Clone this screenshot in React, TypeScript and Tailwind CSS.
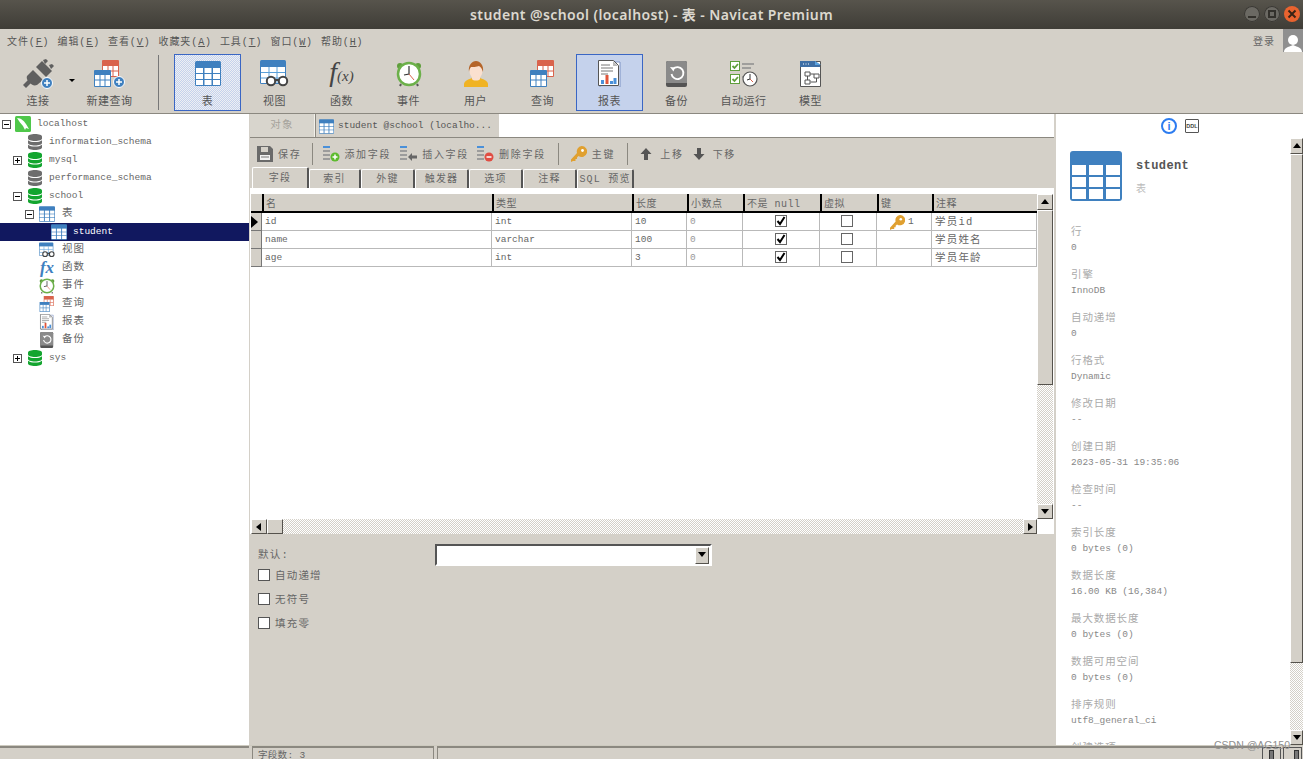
import { ReactNode } from 'react';

const FONT = "font-['Liberation_Mono','Noto_Sans_CJK_SC',monospace]";
const RAISED = 'border border-t-white border-l-white border-r-[#55524c] border-b-[#55524c] bg-[#d4d0c8]';
const CHECKER = 'bg-[repeating-conic-gradient(#d4d0c8_0_25%,#ffffff_0_50%)] bg-[length:2px_2px]';

type IconProps = { className?: string };

function TableIcon({ className }: IconProps) {
  return (
    <svg viewBox="0 0 26 25" className={className}>
      <rect width="26" height="25" rx="1.5" fill="#3f80bf" />
      <g fill="#fff">
        <rect x="1" y="7" width="7" height="5" />
        <rect x="9.5" y="7" width="7" height="5" />
        <rect x="18" y="7" width="7" height="5" />
        <rect x="1" y="13" width="7" height="5" />
        <rect x="9.5" y="13" width="7" height="5" />
        <rect x="18" y="13" width="7" height="5" />
        <rect x="1" y="19" width="7" height="5" />
        <rect x="9.5" y="19" width="7" height="5" />
        <rect x="18" y="19" width="7" height="5" />
      </g>
    </svg>
  );
}

function PlusBadge({ cx, cy, r = 5.5 }: { cx: number; cy: number; r?: number }) {
  return (
    <g>
      <circle cx={cx} cy={cy} r={r} fill="#3f80bf" stroke="#fff" strokeWidth="1" />
      <path d={`M${cx - 3} ${cy}h6M${cx} ${cy - 3}v6`} stroke="#fff" strokeWidth="1.5" />
    </g>
  );
}

function PlugIcon({ className }: IconProps) {
  return (
    <svg viewBox="0 0 32 30" className={className}>
      <g fill="#5f5f5f">
        <path d="M1 26l5-5 3 3-5 5z" />
        <path d="M5 17l6-6 10 10-6 5c-3 1-5 0-7-2s-4-4-3-7z" />
        <path d="M14 8l6-6 10 10-6 6z" />
        <path d="M21 1l3-1 2 2-3 3zM27 6l3-1 2 2-3 3z" />
      </g>
      <PlusBadge cx={25} cy={24} />
    </svg>
  );
}

function NewQueryIcon({ className }: IconProps) {
  return (
    <svg viewBox="0 0 32 28" className={className}>
      <rect x="8" y="0" width="17" height="17" rx="1" fill="#d9634c" />
      <path d="M9 6h15v10H9z" fill="#fff" />
      <path d="M14 6v10M19 6v10M9 11h15" stroke="#d9634c" />
      <rect x="0" y="10" width="17" height="17" rx="1" fill="#3f80bf" />
      <path d="M1 15h15v11H1z" fill="#fff" />
      <path d="M6 15v11M11 15v11M1 20h15" stroke="#3f80bf" />
      <PlusBadge cx={25} cy={22} />
    </svg>
  );
}

function QueryIcon({ className }: IconProps) {
  return (
    <svg viewBox="0 0 25 27" className={className}>
      <rect x="7" y="0" width="17" height="17" rx="1" fill="#d9634c" />
      <path d="M8 6h15v10H8z" fill="#fff" />
      <path d="M13 6v10M18 6v10M8 11h15" stroke="#d9634c" />
      <rect x="0" y="10" width="17" height="17" rx="1" fill="#3f80bf" />
      <path d="M1 15h15v11H1z" fill="#fff" />
      <path d="M6 15v11M11 15v11M1 20h15" stroke="#3f80bf" />
    </svg>
  );
}

function ViewIcon({ className }: IconProps) {
  return (
    <svg viewBox="0 0 29 27" className={className}>
      <rect width="26" height="24" rx="1.5" fill="#3f80bf" />
      <path d="M1 7h24v16H1z" fill="#fff" />
      <path d="M9 7v16M17 7v16M1 12.5h24M1 18h24" stroke="#5a9fd8" />
      <circle cx="11" cy="21" r="4.2" fill="#fff" stroke="#444" strokeWidth="2" />
      <circle cx="23" cy="21" r="4.2" fill="#fff" stroke="#444" strokeWidth="2" />
      <path d="M15 20h4" stroke="#444" strokeWidth="2" />
    </svg>
  );
}

function ClockIcon({ className }: IconProps) {
  return (
    <svg viewBox="0 0 26 26" className={className}>
      <circle cx="4" cy="5" r="3" fill="#5f9e3c" />
      <circle cx="22" cy="5" r="3" fill="#5f9e3c" />
      <path d="M5 23l-1 2M21 23l1 2" stroke="#555" strokeWidth="2" />
      <circle cx="13" cy="13" r="11" fill="#fff" stroke="#6cb04a" strokeWidth="2.5" />
      <path d="M13 5v8l-5 1" fill="none" stroke="#333" strokeWidth="1.2" />
      <path d="M13 13l5 6" stroke="#d9634c" strokeWidth="1" />
    </svg>
  );
}

function UserIcon({ className }: IconProps) {
  return (
    <svg viewBox="0 0 24 26" className={className}>
      <path d="M0 26v-3c0-3 5-5 8-6h8c3 1 8 3 8 6v3z" fill="#f0b323" />
      <path d="M8 15h8v3c-1 2-7 2-8 0z" fill="#fbe0cf" />
      <ellipse cx="12" cy="10" rx="6.5" ry="8" fill="#fbe0cf" />
      <path d="M5 11C4 4 8 0 12 0s8 4 7 11c-1-3-2-5-4-6-2 1-7 1-8 1-1 1-2 3-2 5z" fill="#b5652a" />
    </svg>
  );
}

function ReportIcon({ className }: IconProps) {
  return (
    <svg viewBox="0 0 23 27" className={className}>
      <path d="M2 2h20v25H2z" fill="#fff" stroke="#7d92c4" />
      <path d="M.5.5h15l5 5v20H.5z" fill="#fff" stroke="#555" />
      <path d="M15 1v5h5z" fill="#bbb" />
      <path d="M3 5h9M3 8h12M3 11h12M3 14h7" stroke="#777" />
      <rect x="3" y="20" width="3" height="4" fill="#4a90d9" />
      <rect x="7.5" y="15" width="3" height="9" fill="#e0553a" />
      <rect x="12" y="21" width="3" height="3" fill="#4a90d9" />
      <rect x="15.5" y="18" width="3" height="6" fill="#4a90d9" />
    </svg>
  );
}

function BackupIcon({ className }: IconProps) {
  return (
    <svg viewBox="0 0 22 26" className={className}>
      <rect width="21" height="26" rx="2" fill="#545454" />
      <path d="M0 2a2 2 0 012-2h17a2 2 0 012 2v20H0z" fill="#8a8a8a" />
      <path d="M7 8a6 6 0 11-1.5 5" fill="none" stroke="#fff" strokeWidth="1.8" />
      <path d="M4 6l5 .5-1.5 4z" fill="#fff" />
    </svg>
  );
}

function AutoRunIcon({ className }: IconProps) {
  return (
    <svg viewBox="0 0 28 26" className={className}>
      <rect x=".5" y=".5" width="9" height="9" fill="#fff" stroke="#5f9e3c" />
      <path d="M2.5 5l2 2 3.5-4" fill="none" stroke="#5f9e3c" strokeWidth="1.8" />
      <rect x=".5" y="13.5" width="9" height="9" fill="#fff" stroke="#5f9e3c" />
      <path d="M2.5 18l2 2 3.5-4" fill="none" stroke="#5f9e3c" strokeWidth="1.8" />
      <path d="M12 3h12M12 7h9M12 16h3" stroke="#8d8d8d" strokeWidth="1.6" />
      <circle cx="20" cy="18" r="7" fill="#fff" stroke="#555" strokeWidth="1.2" />
      <path d="M20 13v5l-3 1" fill="none" stroke="#333" />
      <path d="M20 18l3 3" stroke="#d9634c" />
    </svg>
  );
}

function ModelIcon({ className }: IconProps) {
  return (
    <svg viewBox="0 0 22 26" className={className}>
      <path d="M.5.5h20v25H.5z" fill="#fff" stroke="#555" />
      <path d="M0 0h15l5 4v2H0z" fill="#3f6fa5" />
      <path d="M15 0l6 4h-6z" fill="#5aa2df" />
      <path d="M3 3h1M5.5 3h1M8 3h1" stroke="#fff" />
      <path d="M5 11h5v4H5zM14 13h5v4h-5zM5 19h5v4H5zM10 13h4M7.5 15v4M16.5 17v4h-6" fill="none" stroke="#555" />
    </svg>
  );
}

function DbIcon({ color, className }: { color: string; className?: string }) {
  return (
    <svg viewBox="0 0 14 16" className={className}>
      <path d="M0 2.5C0 1 3 0 7 0s7 1 7 2.5v2C14 6 11 7 7 7S0 6 0 4.500z" fill={color} />
      <path d="M0 6.200C1.500 7.500 4 8 7 8s5.500-.5 7-1.800V9c0 1.500-3 2.500-7 2.500S0 10.500 0 9z" fill={color} />
      <path d="M0 10.700C1.500 12 4 12.500 7 12.500s5.500-.5 7-1.800v2.800C14 15 11 16 7 16s-7-1-7-2.500z" fill={color} />
    </svg>
  );
}

function DolphinIcon({ className }: IconProps) {
  return (
    <svg viewBox="0 0 16 16" className={className}>
      <rect width="16" height="16" rx="1.5" fill="#4fc74a" />
      <path d="M2 2c4 0 7 3 9 6l3 5-3-1-1 2-2-4C6 8 4 5 2 2z" fill="#fff" />
    </svg>
  );
}

function KeyIcon({ className }: IconProps) {
  return (
    <svg viewBox="0 0 16 16" className={className}>
      <path d="M10.500 0a5.500 5.500 0 11-3 10l-1.500 1.500v1.500H4.500V15H2l-2 1v-2.500L6 7A5.500 5.500 0 0110.500 0z" fill="#e0a030" />
      <circle cx="11.500" cy="4.500" r="1.400" fill="#fff" />
    </svg>
  );
}

function FieldIcon({ badge }: { badge: 'add' | 'insert' | 'remove' }) {
  return (
    <svg viewBox="0 0 17 16" className="h-4 w-[17px] shrink-0">
      <path d="M0 1h7" stroke="#4a90d9" strokeWidth="2" />
      <path d="M0 5h7M0 9h7M0 13h7" stroke="#9c9c9c" strokeWidth="2" />
      {badge === 'add' && (
        <g>
          <circle cx="12" cy="11" r="4.500" fill="#5dbb2e" />
          <path d="M9.500 11h5M12 8.500v5" stroke="#fff" strokeWidth="1.500" />
        </g>
      )}
      {badge === 'remove' && (
        <g>
          <circle cx="12" cy="11" r="4.500" fill="#e04d43" />
          <path d="M9.500 11h5" stroke="#fff" strokeWidth="1.500" />
        </g>
      )}
      {badge === 'insert' && <path d="M8 11l4-4v2.500h5v3h-5V15z" fill="#666" />}
    </svg>
  );
}

function SaveIcon() {
  return (
    <svg viewBox="0 0 16 16" className="h-4 w-4 shrink-0">
      <path d="M0 0h13l3 3v13H0z" fill="#6a6a6a" />
      <rect x="4" y="1" width="7" height="5" fill="#d4d0c8" />
      <rect x="3" y="9" width="10" height="5" fill="#f2f2f2" />
      <path d="M4 11h8" stroke="#777" />
    </svg>
  );
}

function ArrowIcon({ down }: { down?: boolean }) {
  return (
    <svg viewBox="0 0 12 12" className={down ? 'h-3 w-3 shrink-0 rotate-180' : 'h-3 w-3 shrink-0'}>
      <path d="M6 0l5.500 6H8v6H4V6H.5z" fill="#555" />
    </svg>
  );
}

function Triangle({ dir }: { dir: 'up' | 'down' | 'left' | 'right' }) {
  const d = { up: 'M4 1l4 5H0z', down: 'M0 1h8L4 6z', left: 'M6 0v8L1 4z', right: 'M2 0l5 4-5 4z' }[dir];
  return (
    <svg viewBox="0 0 8 8" className="h-2 w-2">
      <path d={d} fill="#000" />
    </svg>
  );
}

function Check({ on, className }: { on?: boolean; className?: string }) {
  return (
    <span className={`flex h-3 w-3 items-center justify-center border border-[#666] bg-white ${className ?? ''}`}>
      {on && (
        <svg viewBox="0 0 10 10" className="h-2.5 w-2.5">
          <path d="M1.500 5l2.500 3 4.500-7" fill="none" stroke="#000" strokeWidth="2" />
        </svg>
      )}
    </span>
  );
}

function ToolBtn({ label, icon, active, hatch, w = 'w-[67px]' }: { label: string; icon: ReactNode; active?: boolean; hatch?: boolean; w?: string }) {
  let state = 'border border-transparent';
  if (active) state = 'border border-[#3a66c4] bg-[#c5d2ec]';
  if (hatch) state = 'border border-[#3a66c4] bg-[repeating-conic-gradient(#c5d2ec_0_25%,#eef0f4_0_50%)] bg-[length:2px_2px]';
  return (
    <div className={`relative flex h-[57px] shrink-0 flex-col items-center ${w} ${state}`}>
      <div className="flex h-[34px] items-center justify-center pt-[3px]">{icon}</div>
      <span className="mt-[6px] text-[11px] leading-[14px] tracking-[0.5px] text-[#555]">{label}</span>
    </div>
  );
}

const MENUS = [
  ['文件(', 'F'], ['编辑(', 'E'], ['查看(', 'V'], ['收藏夹(', 'A'], ['工具(', 'T'], ['窗口(', 'W'], ['帮助(', 'H'],
];

type TreeRow = { label: string; icon: ReactNode; pl: string; slot: string; gap: string; exp?: '+' | '-'; selected?: boolean; cjk?: boolean };

const gray = '#6d6d6d';
const green = '#13a52f';
const L1 = { pl: 'pl-[13px]', slot: 'w-[15px]', gap: 'ml-[7px]' };
const L2 = { pl: 'pl-[25px]', slot: 'w-[14px]', gap: 'ml-[7px]', cjk: true };
const dbIcon = (c: string) => <DbIcon color={c} className="h-4 w-[14px]" />;

const TREE: TreeRow[] = [
  { label: 'localhost', icon: <DolphinIcon className="h-4 w-4" />, pl: 'pl-[2px]', slot: 'w-[13px]', gap: 'ml-[6px]', exp: '-' },
  { label: 'information_schema', icon: dbIcon(gray), ...L1 },
  { label: 'mysql', icon: dbIcon(green), ...L1, exp: '+' },
  { label: 'performance_schema', icon: dbIcon(gray), ...L1 },
  { label: 'school', icon: dbIcon(green), ...L1, exp: '-' },
  { label: '表', icon: <TableIcon className="h-4 w-4" />, ...L2, exp: '-' },
  { label: 'student', icon: <TableIcon className="h-4 w-4" />, pl: 'pl-[37px]', slot: 'w-[14px]', gap: 'ml-[6px]', selected: true },
  { label: '视图', icon: <ViewIcon className="h-4 w-4" />, ...L2 },
  { label: '函数', icon: <span className="block w-4 text-center font-['Liberation_Serif',serif] text-[17px] leading-4 font-bold italic text-[#3f80bf]">fx</span>, ...L2 },
  { label: '事件', icon: <ClockIcon className="h-4 w-4" />, ...L2 },
  { label: '查询', icon: <QueryIcon className="h-4 w-4" />, ...L2 },
  { label: '报表', icon: <ReportIcon className="h-4 w-4" />, ...L2 },
  { label: '备份', icon: <BackupIcon className="h-4 w-4" />, ...L2 },
  { label: 'sys', icon: dbIcon(green), ...L1, exp: '+' },
];

const SUBTABS = [
  ['字段', 'w-[57px]'], ['索引', 'w-[52px]'], ['外键', 'w-[54px]'], ['触发器', 'w-[54px]'], ['选项', 'w-[54px]'], ['注释', 'w-[54px]'], ['SQL 预览', 'w-[57px]'],
];

const COLS = 'grid-cols-[11px_230px_140px_55px_56px_77px_57px_55px_105px]';
const HEADERS = ['名', '类型', '长度', '小数点', '不是 null', '虚拟', '键', '注释'];
const FIELDS = [
  { name: 'id', type: 'int', len: '10', note: '学员id', key: true },
  { name: 'name', type: 'varchar', len: '100', note: '学员姓名' },
  { name: 'age', type: 'int', len: '3', note: '学员年龄' },
];

const INFO = [
  ['行', '0'], ['引擎', 'InnoDB'], ['自动递增', '0'], ['行格式', 'Dynamic'], ['修改日期', '--'],
  ['创建日期', '2023-05-31 19:35:06'], ['检查时间', '--'], ['索引长度', '0 bytes (0)'], ['数据长度', '16.00 KB (16,384)'],
  ['最大数据长度', '0 bytes (0)'], ['数据可用空间', '0 bytes (0)'], ['排序规则', 'utf8_general_ci'], ['创建选项', ''],
];

const CELL = 'flex h-[18px] items-center border-r border-b border-[#b9b9b9] pl-[3px] pt-[2px] text-[9.5px] text-[#666]';

function TitleBar() {
  return (
    <div className="relative flex h-[29px] shrink-0 items-center justify-center bg-gradient-to-b from-[#57544c] to-[#3f3d37]">
      <span className="font-['Noto_Sans','Noto_Sans_CJK_SC',sans-serif] text-[14px] font-semibold tracking-[0.4px] text-[#dcd8cf]">student @school (localhost) - 表 - Navicat Premium</span>
      <div className="absolute right-[3px] top-[6px] flex gap-[4px]">
        <span className="flex h-4 w-4 items-center justify-center rounded-full bg-[#6b6963] shadow-[inset_0_0_0_1px_#3a3833]">
          <span className="mt-[5px] h-[2px] w-2 bg-[#33312c]" />
        </span>
        <span className="flex h-4 w-4 items-center justify-center rounded-full bg-[#6b6963] shadow-[inset_0_0_0_1px_#3a3833]">
          <span className="h-2 w-2 border-2 border-[#33312c]" />
        </span>
        <span className="flex h-4 w-4 items-center justify-center rounded-full bg-[#e9632f] text-[#3a2315]">
          <svg viewBox="0 0 10 10" className="h-2.5 w-2.5">
            <path d="M1.500 1.500l7 7M8.500 1.500l-7 7" stroke="currentColor" strokeWidth="2" />
          </svg>
        </span>
      </div>
    </div>
  );
}

function MenuBar() {
  return (
    <div className="flex h-[25px] shrink-0 items-center pl-[7px]">
      <div className="flex gap-[8px] pt-[1px]">
        {MENUS.map(([text, key]) => (
          <span key={key} className="text-[10px] tracking-[0.9px] text-[#555]">
            {text}
            <span className="underline">{key}</span>)
          </span>
        ))}
      </div>
      <span className="ml-auto mr-[8px] pt-[1px] text-[10px] tracking-[1px] text-[#666]">登录</span>
      <div className="flex h-[23px] w-[20px] items-end justify-center self-start overflow-hidden bg-[#8f8f8f]">
        <svg viewBox="0 0 20 20" className="h-5 w-5">
          <circle cx="10" cy="8" r="5" fill="#fff" />
          <path d="M1 20c0-4 4-5 9-7 5 2 9 3 9 7z" fill="#fff" />
        </svg>
      </div>
    </div>
  );
}

function Toolbar() {
  return (
    <div className="flex h-[59px] shrink-0 items-start pl-[5px]">
      <ToolBtn label="连接" w="w-[66px]" icon={<PlugIcon className="h-[30px] w-[32px]" />} />
      <div className="mt-[25px] w-[5px] shrink-0 -translate-x-[2px]">
        <span className="block h-0 w-0 border-x-[3px] border-t-[3px] border-x-transparent border-t-black" />
      </div>
      <ToolBtn label="新建查询" icon={<NewQueryIcon className="h-[28px] w-[32px]" />} />
      <div className="ml-[15px] mr-[15px] mt-[1px] h-[55px] w-[1px] shrink-0 bg-[#777]" />
      <ToolBtn label="表" hatch icon={<TableIcon className="h-[25px] w-[26px]" />} />
      <ToolBtn label="视图" icon={<ViewIcon className="h-[27px] w-[29px]" />} />
      <ToolBtn label="函数" icon={<span className="font-['Liberation_Serif',serif] text-[28px] leading-7 italic text-[#444]">f<span className="text-[15px]">(x)</span></span>} />
      <ToolBtn label="事件" icon={<ClockIcon className="h-[26px] w-[26px]" />} />
      <ToolBtn label="用户" icon={<UserIcon className="h-[26px] w-[24px]" />} />
      <ToolBtn label="查询" icon={<QueryIcon className="h-[27px] w-[25px]" />} />
      <ToolBtn label="报表" active icon={<ReportIcon className="h-[27px] w-[23px]" />} />
      <ToolBtn label="备份" icon={<BackupIcon className="h-[26px] w-[22px]" />} />
      <ToolBtn label="自动运行" icon={<AutoRunIcon className="h-[26px] w-[28px]" />} />
      <ToolBtn label="模型" icon={<ModelIcon className="h-[26px] w-[22px]" />} />
    </div>
  );
}

function Tree() {
  return (
    <div className="w-[249px] shrink-0 overflow-hidden bg-white pt-[1px]">
      {TREE.map((row) => (
        <div key={row.label} className={`flex h-[18px] items-center ${row.pl} ${row.selected ? 'bg-[#11185f] text-white' : 'text-[#666]'}`}>
          <span className={`flex shrink-0 ${row.slot}`}>
            {row.exp && (
              <span className="relative flex h-[9px] w-[9px] items-center justify-center border border-[#555] bg-white">
                <span className="h-[1px] w-[5px] bg-black" />
                {row.exp === '+' && <span className="absolute h-[5px] w-[1px] bg-black" />}
              </span>
            )}
          </span>
          <span className="shrink-0">{row.icon}</span>
          <span className={`${row.gap} ${row.cjk ? 'text-[10.5px] tracking-[1px]' : 'text-[9.5px]'}`}>{row.label}</span>
        </div>
      ))}
    </div>
  );
}

function VScroll({ thumb, className }: { thumb: string; className?: string }) {
  return (
    <div className={`flex shrink-0 flex-col ${className ?? ''}`}>
      <div className={`flex h-[16px] shrink-0 items-center justify-center ${RAISED}`}><Triangle dir="up" /></div>
      <div className={`shrink-0 ${RAISED} ${thumb}`} />
      <div className={`min-h-0 flex-1 ${CHECKER}`} />
      <div className={`flex h-[15px] shrink-0 items-center justify-center ${RAISED}`}><Triangle dir="down" /></div>
    </div>
  );
}

function FieldsTable() {
  return (
    <div className="flex h-[346px] shrink-0 flex-col bg-white pl-[1px] pr-[1px] pt-[6px]">
      <div className="flex min-h-0 flex-1">
        <div className="w-[786px] shrink-0">
          <div className={`grid ${COLS} border-b-2 border-black`}>
            <div className="h-[17px] bg-[#d4d0c8]" />
            {HEADERS.map((h) => (
              <div key={h} className="flex h-[17px] items-center border-l-2 border-black bg-[#d4d0c8] pl-[2px] pt-[3px] text-[10px] tracking-[0.5px] text-[#666]">{h}</div>
            ))}
          </div>
          {FIELDS.map((f, i) => (
            <div key={f.name} className={`grid ${COLS}`}>
              <div className="flex h-[18px] items-center border-r border-b border-[#777] bg-[#d4d0c8]">
                {i === 0 && <span className="h-0 w-0 border-y-[6px] border-l-[7px] border-y-transparent border-l-black" />}
              </div>
              <div className={CELL}>{f.name}</div>
              <div className={CELL}>{f.type}</div>
              <div className={CELL}>{f.len}</div>
              <div className={`${CELL} text-[#999]`}>0</div>
              <div className={`${CELL} justify-center pl-0 pr-[3px]`}><Check on className="mb-[4px]" /></div>
              <div className={`${CELL} justify-center pl-0 pr-[5px]`}><Check className="mb-[4px]" /></div>
              <div className={`${CELL} pl-[13px]`}>
                {f.key && <KeyIcon className="mb-[1px] mr-[3px] h-[15px] w-[15px]" />}
                {f.key && <span>1</span>}
              </div>
              <div className={`${CELL} text-[10.5px] tracking-[1.2px]`}>{f.note}</div>
            </div>
          ))}
        </div>
        <VScroll thumb="h-[175px]" className="w-[16px]" />
      </div>
      <div className="flex h-[15px] w-[786px] shrink-0">
        <div className={`flex h-[15px] w-[16px] items-center justify-center ${RAISED}`}><Triangle dir="left" /></div>
        <div className={`h-[15px] w-[16px] ${RAISED}`} />
        <div className={`flex-1 ${CHECKER}`} />
        <div className={`flex h-[15px] w-[14px] items-center justify-center ${RAISED}`}><Triangle dir="right" /></div>
      </div>
    </div>
  );
}

function Center() {
  return (
    <div className="flex w-[807px] shrink-0 flex-col pl-[1px] pr-[2px]">
      <div className="flex h-[24px] shrink-0 border-b border-[#8b8880]">
        <div className="flex w-[65px] items-center justify-center border-r border-[#f2f0ea] bg-[#d8d5cd] pt-[1px] text-[10.5px] tracking-[1.2px] text-[#a5a29b]">对象</div>
        <div className="flex w-[184px] items-center gap-[4px] border-l border-[#8b8880] pl-[3px] pt-[1px] text-[9.5px] text-[#555]">
          <TableIcon className="h-[15px] w-[15px]" />
          <span>student @school (localho...</span>
        </div>
        <div className="flex-1 bg-white" />
      </div>
      <div className="flex h-[29px] shrink-0 items-center pl-[7px] pt-[3px] text-[10px] tracking-[1.7px] text-[#666]">
        <SaveIcon />
        <span className="ml-[5px] pt-[2px]">保存</span>
        <span className="ml-[11px] h-[22px] w-[1px] bg-[#8b8880]" />
        <span className="ml-[10px]"><FieldIcon badge="add" /></span>
        <span className="ml-[4px] pt-[2px]">添加字段</span>
        <span className="ml-[9px]"><FieldIcon badge="insert" /></span>
        <span className="ml-[5px] pt-[2px]">插入字段</span>
        <span className="ml-[8px]"><FieldIcon badge="remove" /></span>
        <span className="ml-[5px] pt-[2px]">删除字段</span>
        <span className="ml-[12px] h-[22px] w-[1px] bg-[#8b8880]" />
        <span className="ml-[12px]"><KeyIcon className="h-4 w-4" /></span>
        <span className="ml-[5px] pt-[2px]">主键</span>
        <span className="ml-[12px] h-[22px] w-[1px] bg-[#8b8880]" />
        <span className="ml-[12px]"><ArrowIcon /></span>
        <span className="ml-[8px] pt-[2px]">上移</span>
        <span className="ml-[9px]"><ArrowIcon down /></span>
        <span className="ml-[8px] pt-[2px]">下移</span>
      </div>
      <div className="flex h-[21px] shrink-0 items-end pl-[2px]">
        {SUBTABS.map(([label, w], i) => (
          <div key={label} className={`flex ${i === 0 ? 'h-[21px]' : 'h-[19px]'} ${w} items-center justify-center rounded-t-[2px] border-t border-l border-r-2 border-t-white border-l-white border-r-[#555] text-[10px] tracking-[1.2px] text-[#666]`}>{label}</div>
        ))}
      </div>
      <FieldsTable />
      <div className="flex-1 pl-[8px] pt-[10px] text-[10.5px] tracking-[1.2px] text-[#666]">
        <div className="flex h-[22px] items-center">
          <span className="w-[177px] pt-[2px]">默认:</span>
          <div className="flex h-[22px] w-[277px] items-center justify-end border-2 border-t-[#555] border-l-[#555] border-r-white border-b-white bg-white pr-[1px]">
            <div className={`flex h-[17px] w-[14px] items-center justify-center ${RAISED}`}><Triangle dir="down" /></div>
          </div>
        </div>
        <div className="-mt-[3px] flex flex-col">
          {['自动递增', '无符号', '填充零'].map((label) => (
            <div key={label} className="flex h-[24px] items-center gap-[5px]">
              <span className="h-3 w-3 border border-[#555] bg-white" />
              <span className="pt-[3px]">{label}</span>
            </div>
          ))}
        </div>
      </div>
    </div>
  );
}

function InfoPanel() {
  return (
    <div className="flex min-w-0 flex-1 flex-col bg-white">
      <div className="flex h-[24px] shrink-0 items-center justify-center gap-[8px] pl-[1px]">
        <span className="flex h-4 w-4 items-center justify-center rounded-full border-2 border-[#2c7cf0] font-['Liberation_Sans',sans-serif] text-[11px] leading-none font-bold text-[#2c7cf0]">i</span>
        <span className="flex h-[14px] w-[14px] items-center justify-center rounded-[1px] border border-[#555] font-['Liberation_Sans',sans-serif] text-[5.5px] font-bold text-[#444]">DDL</span>
      </div>
      <div className="flex min-h-0 flex-1">
        <div className="min-w-0 flex-1 overflow-hidden pl-[15px] pt-[13px]">
          <div className="-ml-[1px] flex h-[50px]">
            <TableIcon className="h-[50px] w-[52px]" />
            <div className="ml-[14px] pt-[8px]">
              <div className="text-[12px] leading-[14px] font-bold tracking-[0.4px] text-[#555]">student</div>
              <div className="mt-[9px] text-[10px] text-[#bbb]">表</div>
            </div>
          </div>
          <div className="mt-[23px]">
            {INFO.map(([label, value]) => (
              <div key={label} className="h-[43px] overflow-hidden">
                <div className="h-[17px] text-[10.5px] leading-[16px] tracking-[0.9px] text-[#aaa]">{label}</div>
                <div className="h-[14px] text-[9.5px] leading-[14px] text-[#888]">{value}</div>
              </div>
            ))}
          </div>
        </div>
        <VScroll thumb="h-[509px]" className="w-[13px]" />
      </div>
    </div>
  );
}

function StatusBar() {
  return (
    <div className="relative flex h-[14px] shrink-0 overflow-hidden border-t border-[#cdcabf] text-[9.5px] text-[#666]">
      <div className="mr-[3px] w-[249px] border-t-2 border-[#8b8880]" />
      <div className="mr-[3px] h-[20px] w-[182px] border-t-2 border-l border-r border-[#8b8880] pl-[5px] leading-[16px] tracking-[0.3px]">字段数: 3</div>
      <div className="h-[20px] flex-1 border-t-2 border-l border-[#8b8880]" />
      <div className="flex gap-[2px] pr-[1px]">
        <span className="mt-[1px] h-[14px] w-[19px] border border-[#555]"><span className="mx-auto mt-[2px] block h-[10px] w-[5px] border border-[#333] bg-[#777]" /></span>
        <span className="mt-[1px] h-[14px] w-[19px] border border-[#555]"><span className="ml-auto mr-[2px] mt-[2px] block h-[10px] w-[5px] border border-[#333] bg-[#777]" /></span>
      </div>
    </div>
  );
}

export default function App() {
  return (
    <div className={`relative flex h-[759px] w-[1303px] flex-col overflow-hidden bg-[#d4d0c8] ${FONT}`}>
      <TitleBar />
      <MenuBar />
      <Toolbar />
      <div className="flex min-h-0 flex-1 border-t border-[#8b8880]">
        <Tree />
        <Center />
        <InfoPanel />
      </div>
      <StatusBar />
      <span className="absolute left-[1214px] top-[738px] font-['Liberation_Sans',sans-serif] text-[10.5px] text-[#8f8f8f]">CSDN @AG150</span>
    </div>
  );
}
